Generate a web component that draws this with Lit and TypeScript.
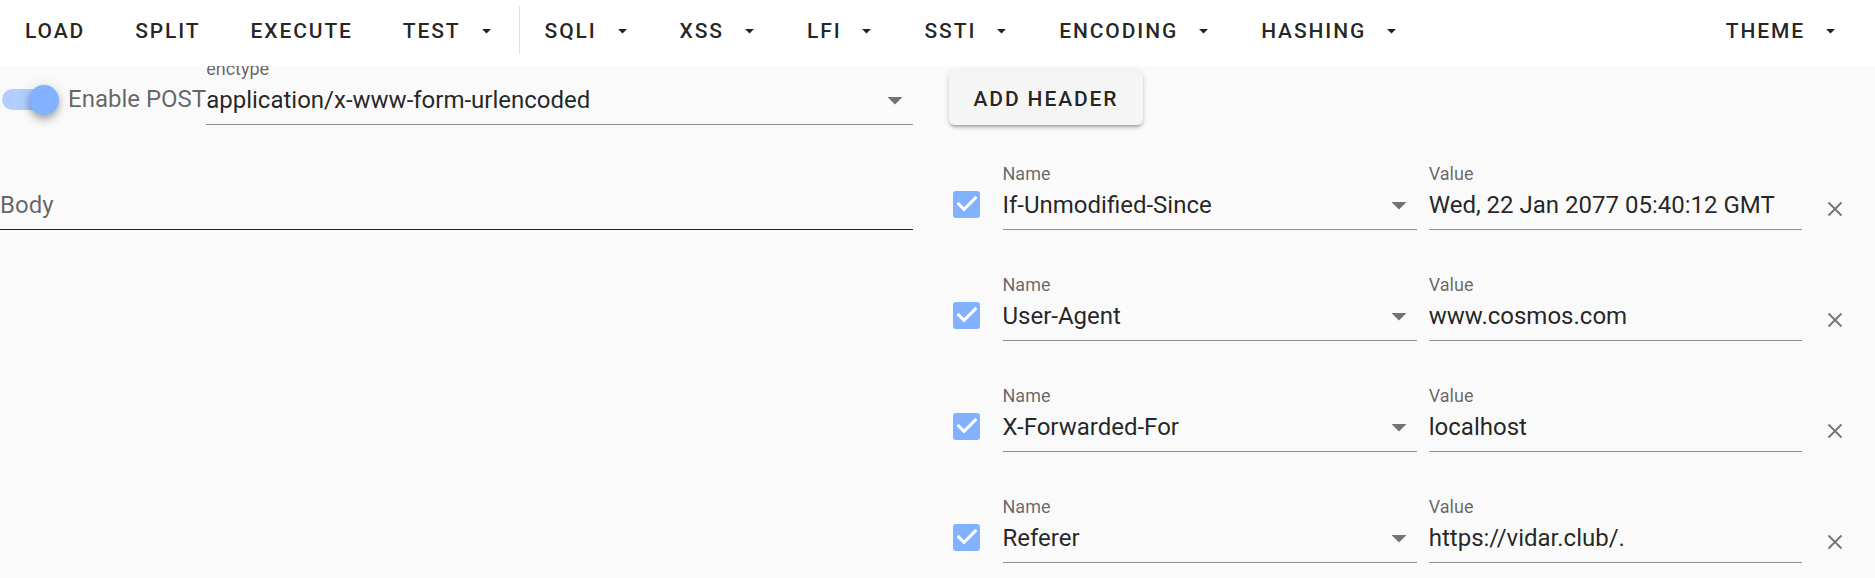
import { LitElement, html, css } from "lit";
import { customElement, property, state } from "lit/decorators.js";

interface HeaderEntry {
  enabled: boolean;
  name: string;
  value: string;
}

const BASE = css`
  *,
  *::before {
    box-sizing: border-box;
  }
  button,
  input,
  select,
  textarea {
    margin: 0;
    padding: 0;
    border: 0;
    border-radius: 0;
    background: none;
    color: inherit;
    font: inherit;
    outline: none;
    appearance: none;
  }
`;

@customElement("menu-bar")
class MenuBar extends LitElement {
  @property({ type: Array }) actions: string[] = [];
  @property({ type: Array }) menus: string[] = [];

  static styles = [
    BASE,
    css`
      :host {
        display: block;
      }
      .bar {
        display: flex;
        align-items: center;
        height: 66px;
        padding: 0 12px 6px 0;
        background: #fff;
      }
      .item {
        display: flex;
        align-items: center;
        height: 48px;
        padding: 2px 25px 0;
        font-size: 21px;
        font-weight: 500;
        line-height: 30px;
        letter-spacing: 0.09em;
        text-transform: uppercase;
        white-space: nowrap;
        cursor: pointer;
      }
      .caret {
        width: 27px;
        height: 27px;
        margin: 0 -6px 0 12px;
      }
      .divider {
        width: 1px;
        height: 48px;
        background: rgba(0, 0, 0, 0.12);
      }
      .spacer {
        flex: 1;
      }
    `,
  ];

  private menu(label: string) {
    return html`<button class="item" type="button" aria-haspopup="menu">
      ${label}
      <svg class="caret" viewBox="0 0 27 27" aria-hidden="true">
        <path d="M9 11h9L13.5 15.5z" fill="currentColor" />
      </svg>
    </button>`;
  }

  render() {
    return html`<nav class="bar" aria-label="Tools">
      ${this.actions.map((a) => html`<button class="item" type="button">${a}</button>`)}
      ${this.menu("Test")}
      <span class="divider"></span>
      ${this.menus.map((m) => this.menu(m))}
      <span class="spacer"></span>
      ${this.menu("Theme")}
    </nav>`;
  }
}

@customElement("app-root")
class AppRoot extends LitElement {
  @state() private postEnabled = true;
  @state() private headers: HeaderEntry[] = [
    { enabled: true, name: "If-Unmodified-Since", value: "Wed, 22 Jan 2077 05:40:12 GMT" },
    { enabled: true, name: "User-Agent", value: "www.cosmos.com" },
    { enabled: true, name: "X-Forwarded-For", value: "localhost" },
    { enabled: true, name: "Referer", value: "https://vidar.club/." },
  ];

  static styles = [
    BASE,
    css`
      :host {
        display: block;
        min-height: 100vh;
        background: #fafafa;
        color: rgba(0, 0, 0, 0.87);
        font-family: Roboto, "Liberation Sans", sans-serif;
        font-size: 24px;
      }
      .toolbar {
        position: sticky;
        top: 0;
        z-index: 1;
      }
      .content {
        display: grid;
        grid-template-columns: minmax(0, 1fr) minmax(0, 1fr);
        margin-top: -5px;
      }
      .request {
        display: flex;
        flex-direction: column;
        gap: 41px;
        padding-right: 25px;
      }
      .headers {
        display: flex;
        flex-direction: column;
        gap: 41px;
        padding: 0 13px 0 11px;
      }
      .line {
        display: flex;
        align-items: flex-end;
        height: 64px;
      }
      .list {
        display: flex;
        flex-direction: column;
        gap: 47px;
      }
      .entry {
        display: grid;
        grid-template-columns: 54px minmax(0, 18fr) minmax(0, 17fr) 54px;
        align-items: end;
      }
      .entry .value {
        margin: 0 6px 0 12px;
      }
      .field {
        display: grid;
        grid-template-rows: 16px 48px;
        flex: 1;
        min-width: 0;
      }
      .caption {
        grid-area: 1 / 1;
        color: rgba(0, 0, 0, 0.6);
        font-size: 18px;
        line-height: 16px;
      }
      .control {
        grid-area: 2 / 1;
        width: 100%;
        height: 48px;
        padding-bottom: 2px;
        border-bottom: 1px solid rgba(0, 0, 0, 0.42);
        line-height: 45px;
        resize: none;
        overflow: hidden;
      }
      select.control {
        padding-bottom: 0;
      }
      .area {
        border-bottom-color: rgba(0, 0, 0, 0.87);
      }
      .placeholder {
        grid-area: 2 / 1;
        color: rgba(0, 0, 0, 0.6);
        line-height: 47px;
        pointer-events: none;
      }
      .arrow {
        grid-area: 2 / 1;
        justify-self: end;
        width: 36px;
        height: 36px;
        margin-top: 5px;
        color: rgba(0, 0, 0, 0.54);
        pointer-events: none;
      }
      .switch {
        display: flex;
        align-items: center;
        gap: 12px;
        padding: 0 0 3px 2px;
        color: rgba(0, 0, 0, 0.6);
        line-height: 45px;
        white-space: nowrap;
      }
      .toggle {
        display: flex;
        align-items: center;
        width: 54px;
        height: 21px;
        border-radius: 11px;
        background: rgba(0, 0, 0, 0.38);
      }
      .toggle::before {
        content: "";
        flex: none;
        width: 30px;
        height: 30px;
        border-radius: 50%;
        background: #fff;
        box-shadow: 0 3px 6px -1px rgba(0, 0, 0, 0.2), 0 6px 8px rgba(0, 0, 0, 0.14),
          0 1px 15px rgba(0, 0, 0, 0.12);
      }
      .toggle:checked {
        padding-left: 27px;
        background: rgba(130, 177, 255, 0.6);
      }
      .toggle:checked::before {
        background: #82b1ff;
      }
      .add {
        height: 54px;
        padding: 2px 25px 0;
        border-radius: 6px;
        background: #f5f5f5;
        box-shadow: 0 4px 2px -3px rgba(0, 0, 0, 0.2), 0 3px 3px rgba(0, 0, 0, 0.14),
          0 1px 7px rgba(0, 0, 0, 0.12);
        font-size: 21px;
        font-weight: 500;
        letter-spacing: 0.09em;
        text-transform: uppercase;
        cursor: pointer;
      }
      .tick {
        display: grid;
        place-items: center;
        width: 36px;
        height: 52px;
      }
      .box {
        grid-area: 1 / 1;
        width: 27px;
        height: 27px;
        border: 3px solid rgba(0, 0, 0, 0.54);
        border-radius: 3px;
      }
      .box:checked {
        border-color: #82b1ff;
        background: #82b1ff;
      }
      .check {
        grid-area: 1 / 1;
        width: 36px;
        height: 36px;
        pointer-events: none;
      }
      .remove {
        display: grid;
        place-items: center;
        width: 54px;
        height: 54px;
        margin-bottom: -6px;
        color: rgba(0, 0, 0, 0.54);
        cursor: pointer;
      }
      .cross {
        width: 24px;
        height: 24px;
      }
    `,
  ];

  private arrow() {
    return html`<svg class="arrow" viewBox="0 0 24 24" aria-hidden="true">
      <path d="M7 10l5 5 5-5z" fill="currentColor" />
    </svg>`;
  }

  private toggleEntry(index: number, enabled: boolean) {
    this.headers = this.headers.map((h, i) => (i === index ? { ...h, enabled } : h));
  }

  private entry(h: HeaderEntry, i: number) {
    return html`<div class="entry">
      <div class="tick">
        <input
          class="box"
          type="checkbox"
          aria-label="Enable ${h.name}"
          .checked=${h.enabled}
          @change=${(e: Event) => this.toggleEntry(i, (e.target as HTMLInputElement).checked)}
        />
        ${h.enabled
          ? html`<svg class="check" viewBox="0 0 24 24" aria-hidden="true">
              <path d="M10 17L5 12L6.41 10.58L10 14.17L17.59 6.58L19 8z" fill="#fff" />
            </svg>`
          : ""}
      </div>
      <div class="field">
        <label class="caption" for="name-${i}">Name</label>
        <select class="control" id="name-${i}">
          <option>${h.name}</option>
        </select>
        ${this.arrow()}
      </div>
      <div class="field value">
        <label class="caption" for="value-${i}">Value</label>
        <input class="control" id="value-${i}" type="text" .value=${h.value} />
      </div>
      <button
        class="remove"
        type="button"
        aria-label="Remove ${h.name}"
        @click=${() => (this.headers = this.headers.filter((_, n) => n !== i))}
      >
        <svg class="cross" viewBox="0 0 24 24" aria-hidden="true">
          <path d="M5.5 5.5l13 13M18.5 5.5l-13 13" stroke="currentColor" stroke-width="1.8" fill="none" />
        </svg>
      </button>
    </div>`;
  }

  render() {
    return html`
      <menu-bar
        class="toolbar"
        .actions=${["Load", "Split", "Execute"]}
        .menus=${["SQLi", "XSS", "LFI", "SSTI", "Encoding", "Hashing"]}
      ></menu-bar>
      <main class="content">
        <section class="request">
          <div class="line">
            <label class="switch">
              <input
                class="toggle"
                type="checkbox"
                role="switch"
                .checked=${this.postEnabled}
                @change=${(e: Event) => (this.postEnabled = (e.target as HTMLInputElement).checked)}
              />
              Enable POST
            </label>
            <div class="field">
              <label class="caption" for="enctype">enctype</label>
              <select class="control" id="enctype">
                <option>application/x-www-form-urlencoded</option>
              </select>
              ${this.arrow()}
            </div>
          </div>
          <div class="field">
            <textarea class="control area" id="body" rows="1"></textarea>
            <label class="placeholder" for="body">Body</label>
          </div>
        </section>
        <section class="headers">
          <div class="line">
            <button
              class="add"
              type="button"
              @click=${() => (this.headers = [...this.headers, { enabled: true, name: "", value: "" }])}
            >
              Add Header
            </button>
          </div>
          <div class="list">${this.headers.map((h, i) => this.entry(h, i))}</div>
        </section>
      </main>
    `;
  }
}
